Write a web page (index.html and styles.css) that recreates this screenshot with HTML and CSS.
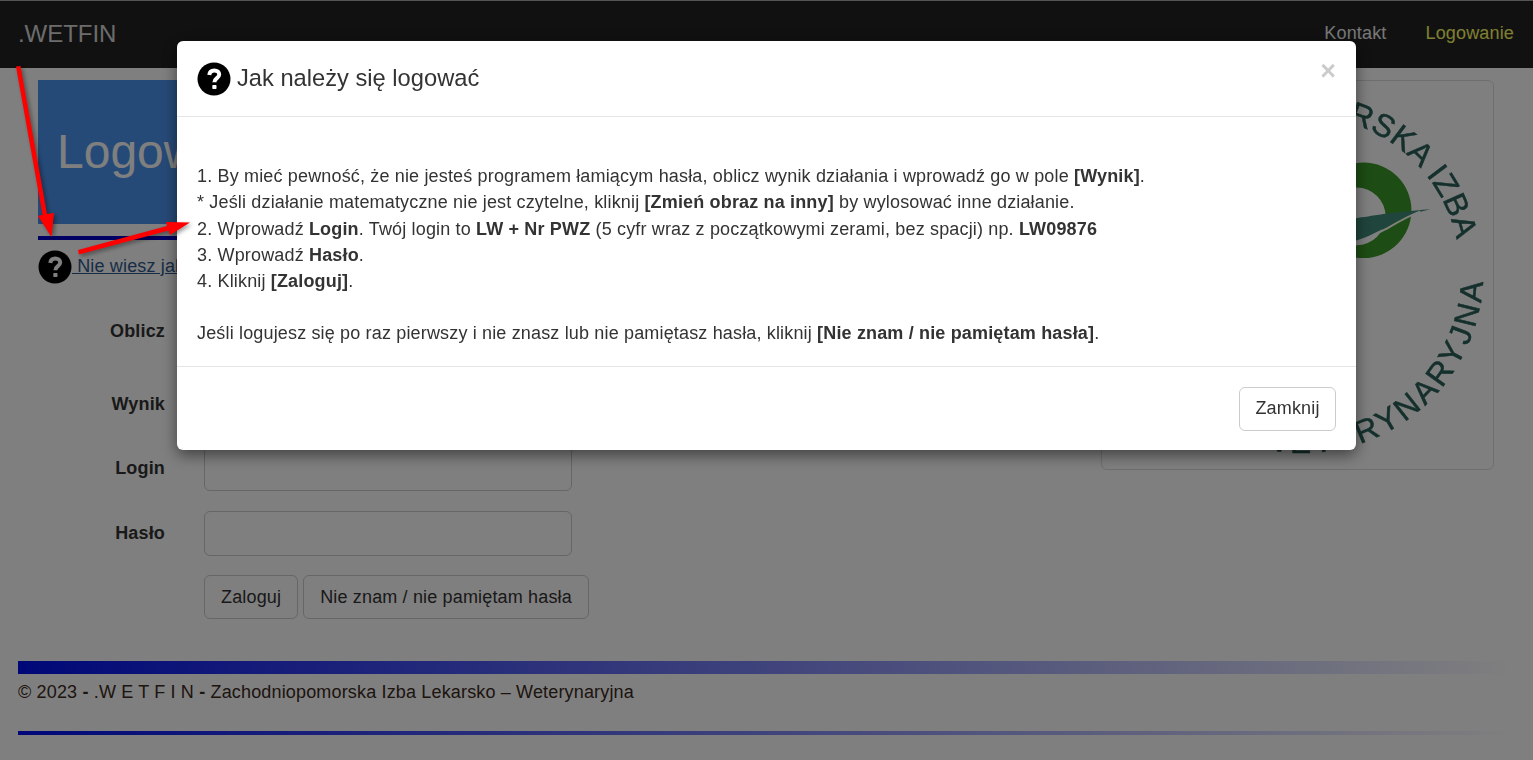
FILE: index.html
```html
<!DOCTYPE html>
<html lang="pl">
<head>
<meta charset="utf-8">
<title>Logowanie - WETFIN</title>
<link rel="stylesheet" href="styles.css">
</head>
<body>
<nav class="navbar">
  <a class="brand">.WETFIN</a>
  <ul class="nav-links">
    <li><a>Kontakt</a></li>
    <li><a class="active">Logowanie</a></li>
  </ul>
</nav>
<main class="main">
  <section class="left">
    <div class="jumbo"><h1>Logowanie</h1></div>
    <div class="rule"></div>
    <div class="help">
      <svg class="qicon" viewBox="0 0 34 34"><circle cx="17" cy="17" r="16.500" fill="#000"/><path d="M12.300 13c.3-2.900 2.300-4.600 5-4.600 2.900 0 4.900 1.600 4.900 4.200 0 3.700-4.800 3.500-4.800 7.600" fill="none" stroke="#fff" stroke-width="4"/><rect x="15.300" y="23" width="4.200" height="4" rx=".7" fill="#fff"/></svg>
      <a class="help-link">&nbsp;Nie wiesz jak się logować?</a>
    </div>
    <form class="form">
      <div class="row row-captcha row-shift"><label>Oblicz</label><div class="captcha"></div></div>
      <div class="row row-shift"><label>Wynik</label><div class="input"></div></div>
      <div class="row"><label>Login</label><div class="input"></div></div>
      <div class="row"><label>Hasło</label><div class="input"></div></div>
      <div class="row row-buttons"><span></span><div class="buttons"><button type="button" class="btn btn-low">Zaloguj</button><button type="button" class="btn btn-low">Nie znam / nie pamiętam hasła</button></div></div>
    </form>
  </section>
  <aside class="card">
    <svg class="logo" viewBox="0 0 393 390">
      <defs>
        <path id="arc-top" d="M 44 193 A 158 158 0 0 1 360 193"/>
        <path id="arc-bot" d="M 21 193 A 181 181 0 0 0 383 193"/>
      </defs>
      <text class="seal seal-top"><textPath href="#arc-top" startOffset="93.300%" text-anchor="end">ZACHODNIOPOMORSKA IZBA</textPath></text>
      <text class="seal seal-bot"><textPath href="#arc-bot" startOffset="98.900%" text-anchor="end">LEKARSKO WETERYNARYJNA</textPath></text>
      <path class="ring" fill-rule="evenodd" d="M215 130a48 48 0 1 0 96 0a48 48 0 1 0-96 0ZM227 136a29 29 0 1 0 58 0a29 29 0 1 0-58 0Z"/>
      <path class="leaf" d="M180 150C210 142 235 138 255 138C270 136 290 132 330 129C310 134 300 138 288 146C275 152 265 158 255 162C230 170 200 168 180 150Z"/>
      <path class="vein" d="M200 172C230 170 262 162 285 149C297 142 307 136 320 131"/>
    </svg>
  </aside>
</main>
<footer class="footer">
  <div class="bar bar-thick"></div>
  <p class="copy">© 2023 <b>-</b> .W E T F I N <b>-</b> Zachodniopomorska Izba Lekarsko – Weterynaryjna</p>
  <div class="bar bar-thin"></div>
</footer>

<div class="backdrop"></div>
<div class="modal">
  <header class="modal-head">
    <svg class="qicon" viewBox="0 0 34 34"><circle cx="17" cy="17" r="16.500" fill="#000"/><path d="M12.300 13c.3-2.900 2.300-4.600 5-4.600 2.900 0 4.900 1.600 4.900 4.200 0 3.700-4.800 3.500-4.800 7.600" fill="none" stroke="#fff" stroke-width="4"/><rect x="15.300" y="23" width="4.200" height="4" rx=".7" fill="#fff"/></svg>
    <h4>Jak należy się logować</h4>
    <span class="close">×</span>
  </header>
  <div class="modal-body">
    <br>
    1. By mieć pewność, że nie jesteś programem łamiącym hasła, oblicz wynik działania i wprowadź go w pole <b>[Wynik]</b>.<br>
    * Jeśli działanie matematyczne nie jest czytelne, kliknij <b>[Zmień obraz na inny]</b> by wylosować inne działanie.<br>
    2. Wprowadź <b>Login</b>. Twój login to <b>LW + Nr PWZ</b> (5 cyfr wraz z początkowymi zerami, bez spacji) np. <b>LW09876</b><br>
    3. Wprowadź <b>Hasło</b>.<br>
    4. Kliknij <b>[Zaloguj]</b>.<br>
    <br>
    Jeśli logujesz się po raz pierwszy i nie znasz lub nie pamiętasz hasła, kliknij <b>[Nie znam / nie pamiętam hasła]</b>.
  </div>
  <div class="modal-foot"><button type="button" class="btn btn-white">Zamknij</button></div>
</div>
<svg class="arrows" viewBox="0 0 1533 760">
  <path d="M16 66.500L20.500 66 47 214 54 213 51.500 237 38 216 42.500 214.800Z"/>
  <path d="M78 250L167 226 166 222 190 222.500 170 235 168.500 230.500 79 254.500Z"/>
</svg>
</body>
</html>
```
FILE: styles.css
```css
* { box-sizing: border-box; }
html, body { margin: 0; height: 100%; overflow: hidden; }
body { background: #fff; color: #333; font-family: "Liberation Sans", Arial, sans-serif; font-size: 18px; letter-spacing: .16px; line-height: 1.43; }

.navbar { height: 68px; background: #222; border-top: 1px solid #aaa; display: flex; align-items: center; justify-content: space-between; padding: 0 19px 2px 18px; }
.brand { color: #d8d8d8; font-size: 24px; letter-spacing: -.05px; line-height: 1; }
.nav-links { list-style: none; margin: 0; padding: 0; display: flex; gap: 39px; font-size: 18px; }
.nav-links a { color: #eee; }
.nav-links a.active { color: #ffff66; }

.main { display: flex; padding: 12px 39px 0 38px; gap: 16px; }
.left { flex: 1; min-width: 0; }
.jumbo { height: 144px; background: #4c94ef; padding: 0 19px; display: flex; align-items: center; }
.jumbo h1 { margin: 0; color: #fff; font-size: 48px; font-weight: 400; line-height: 1; letter-spacing: 0; }
.rule { height: 4px; margin-top: 12px; background: #0000c8; }
.help { display: flex; align-items: center; height: 34px; margin-top: 10px; }
.qicon { width: 34px; height: 34px; flex: none; }
.help-link { color: #2f5a8f; text-decoration: underline; }

.form { margin-top: 16px; }
.row { display: grid; grid-template-columns: 127px 368px; column-gap: 39px; align-items: center; margin-bottom: 20px; }
.row label { font-weight: 700; text-align: right; }
.row-shift label { padding-top: 3px; }
.row-captcha { height: 61px; }
.input { height: 45px; border: 1px solid #ccc; border-radius: 6px; background: #fff; }
.row-buttons { margin-top: -1px; grid-template-columns: 127px auto; justify-content: start; }
.buttons { display: flex; gap: 5px; }
.btn { height: 44px; padding: 0 16px; font: inherit; letter-spacing: inherit; color: #333; background: #fff; border: 1px solid #ccc; border-radius: 6px; white-space: nowrap; }
.btn-low { padding-top: 2px; }

.card { width: 393px; height: 390px; border: 1px solid #ddd; border-radius: 6px; background: #fff; flex: none; }
.logo { display: block; width: 100%; height: 100%; filter: blur(.6px); }
.seal { font-size: 32px; fill: #2a6058; stroke: #2a6058; stroke-width: .5px; font-family: "Liberation Sans", Arial, sans-serif; }
.seal-top { letter-spacing: .5px; }
.seal-bot { letter-spacing: 3px; }
.ring { fill: #3a9a28; }
.leaf { fill: #3f8a78; }
.vein { fill: none; stroke: #fff; stroke-width: 2px; }

.footer { padding: 0 18px; position: absolute; left: 0; right: 0; top: 661px; }
.bar { background: linear-gradient(to right, #0010f0, #fff); }
.bar-thick { height: 13px; }
.bar-thin { height: 4px; margin-top: 27px; }
.copy { margin: 6px 0 0; font-size: 18px; line-height: 24px; color: #3a2a20; }

.backdrop { position: fixed; inset: 0; background: rgba(0, 0, 0, .5); }
.modal { position: fixed; left: 177px; top: 41px; width: 1179px; background: #fff; border-radius: 6px; box-shadow: 0 5px 15px rgba(0, 0, 0, .5); }
.modal-head { height: 76px; padding: 0 20px; border-bottom: 1px solid #e5e5e5; display: flex; align-items: center; gap: 6px; position: relative; }
.modal-head h4 { margin: 0; font-size: 23.700px; font-weight: 400; color: #333; letter-spacing: 0; }
.close { position: absolute; right: 20px; top: 17px; font-size: 27px; line-height: 26px; font-weight: 700; color: #000; opacity: .2; letter-spacing: 0; }
.modal-body { padding: 20px; line-height: 26.200px; height: 249px; }
.modal-foot { height: 84px; border-top: 1px solid #e5e5e5; padding: 20px; display: flex; justify-content: flex-end; }
.btn-white { width: 97px; padding: 0; }

.arrows { position: fixed; inset: 0; width: 1533px; height: 760px; pointer-events: none; filter: drop-shadow(2px 2px 2px rgba(0, 0, 0, .4)); }
.arrows path { fill: #f00; }
```
